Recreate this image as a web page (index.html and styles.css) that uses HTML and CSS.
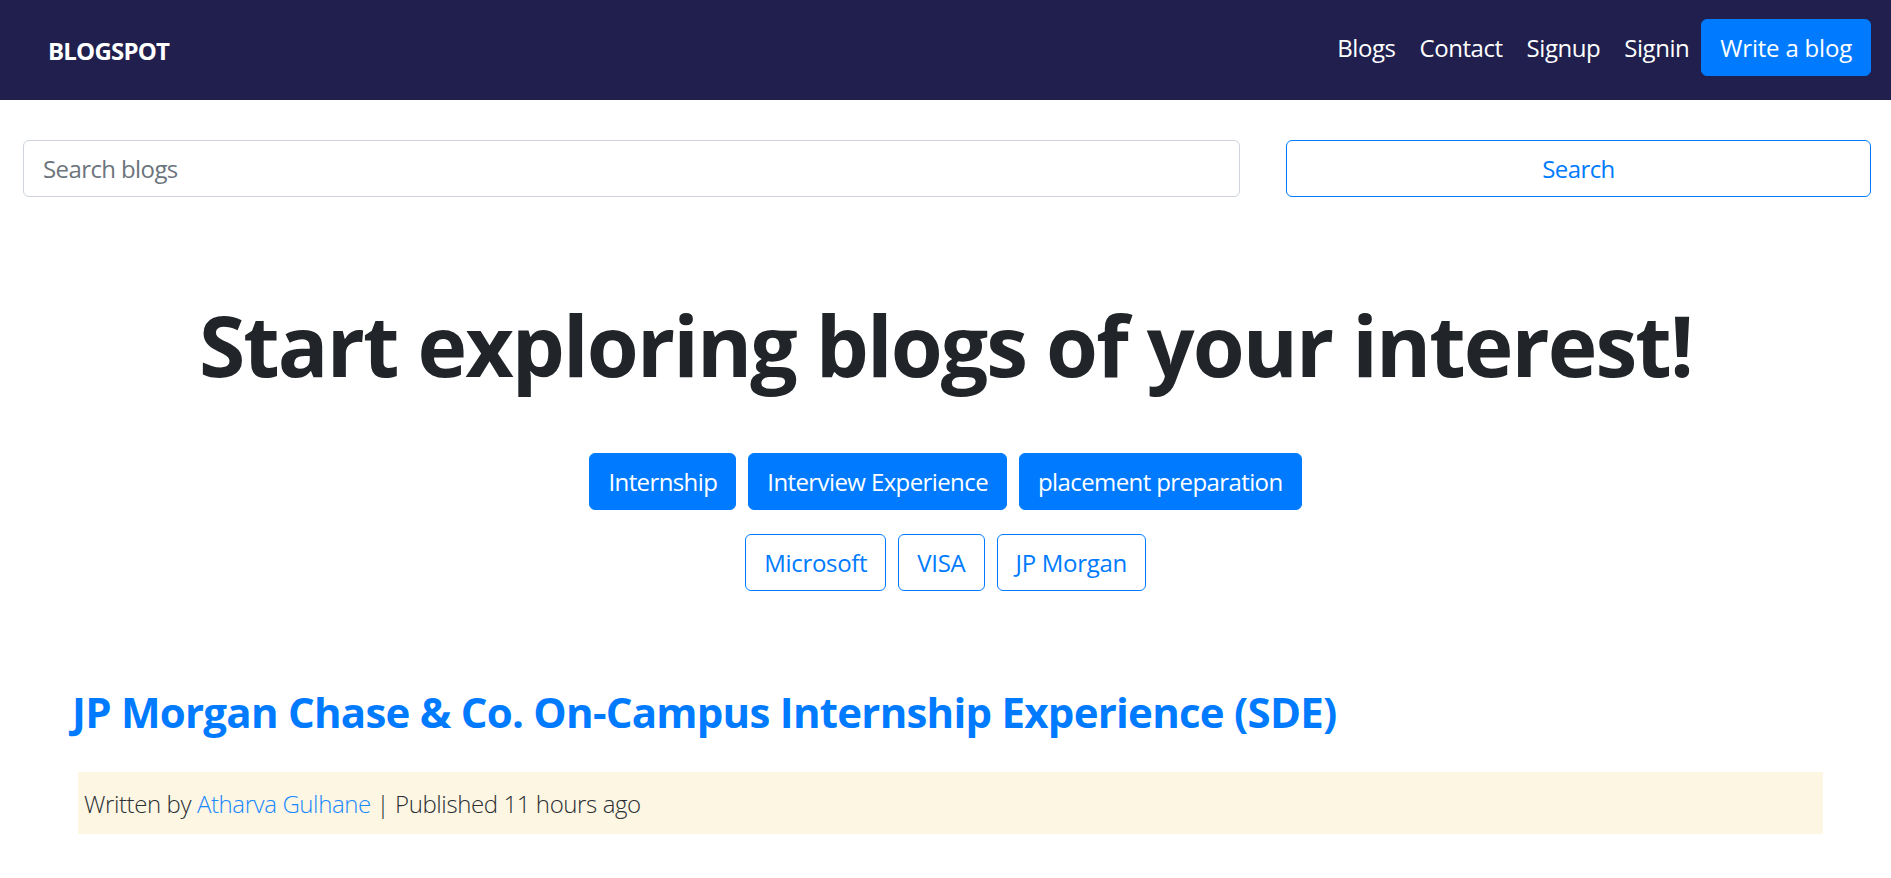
FILE: index.html
```html
<!DOCTYPE html>
<html lang="en">
<head>
<meta charset="utf-8">
<title>BLOGSPOT</title>
<link rel="stylesheet" href="styles.css">
</head>
<body>
<nav class="navbar">
  <a class="brand" href="#">BLOGSPOT</a>
  <div class="nav-links">
    <a class="nav-link" href="#">Blogs</a>
    <a class="nav-link" href="#">Contact</a>
    <a class="nav-link" href="#">Signup</a>
    <a class="nav-link" href="#">Signin</a>
    <a class="btn btn-primary write-btn" href="#">Write a blog</a>
  </div>
</nav>

<form class="search-row">
  <input class="search-input" type="text" placeholder="Search blogs">
  <button class="btn btn-outline search-btn" type="button">Search</button>
</form>

<section class="hero">
  <h1 class="hero-title">Start exploring blogs of your interest!</h1>
  <div class="tag-row">
    <a class="btn btn-primary" href="#">Internship</a>
    <a class="btn btn-primary" href="#">Interview Experience</a>
    <a class="btn btn-primary" href="#">placement preparation</a>
  </div>
  <div class="tag-row">
    <a class="btn btn-outline" href="#">Microsoft</a>
    <a class="btn btn-outline" href="#">VISA</a>
    <a class="btn btn-outline" href="#">JP Morgan</a>
  </div>
</section>

<section class="post">
  <h2 class="post-title"><a href="#">JP Morgan Chase &amp; Co. On-Campus Internship Experience (SDE)</a></h2>
  <p class="post-meta">Written by <a href="#">Atharva Gulhane</a> | Published 11 hours ago</p>
</section>
</body>
</html>
```

FILE: styles.css
```css
* {
  box-sizing: border-box;
}

body {
  margin: 0;
  font-family: "Open Sans", "Noto Sans", sans-serif;
  color: #212529;
  background: #fff;
  letter-spacing: -0.6px;
}

a {
  text-decoration: none;
}

.navbar {
  height: 100px;
  background: #201f4e;
  display: flex;
  align-items: center;
  justify-content: space-between;
  padding: 0 20px 5px 48px;
}

.brand {
  color: #fff;
  font-weight: 700;
  font-size: 24px;
  line-height: 36px;
  padding-top: 6px;
  letter-spacing: -0.8px;
}

.nav-links {
  display: flex;
  align-items: center;
}

.nav-link {
  color: #fff;
  font-size: 24px;
  line-height: 36px;
  padding: 0 12px;
  letter-spacing: -0.45px;
}

.btn {
  display: inline-block;
  font-family: inherit;
  font-size: 24px;
  line-height: 36px;
  padding: 10px 18px 9px;
  border: 1px solid #007bff;
  border-radius: 6px;
  text-align: center;
  cursor: pointer;
  letter-spacing: -0.6px;
}

.write-btn {
  letter-spacing: -0.2px;
}

.btn-primary {
  background: #007bff;
  color: #fff;
}

.btn-outline {
  background: #fff;
  color: #007bff;
}

.search-row {
  display: grid;
  grid-template-columns: 1fr 585px;
  gap: 46px;
  margin: 40px 20px 0 23px;
}

.search-input {
  height: 57px;
  font-family: inherit;
  font-size: 24px;
  padding: 0 19px;
  border: 1px solid #ced4da;
  border-radius: 6px;
  color: #495057;
  letter-spacing: -0.6px;
}

.search-input::placeholder {
  color: #6c757d;
}

.search-btn {
  height: 57px;
}

.hero {
  display: flex;
  flex-direction: column;
  align-items: center;
  margin-top: 98px;
}

.hero-title {
  margin: 0 0 57px;
  font-size: 84px;
  line-height: 1.2;
  font-weight: 700;
  letter-spacing: -1.9px;
}

.tag-row {
  display: flex;
  justify-content: center;
  gap: 12px;
  margin-bottom: 24px;
}

.tag-row .btn-outline {
  letter-spacing: -0.3px;
}

.post {
  margin: 72px 68px 0 72px;
}

.post-title {
  margin: 0 0 35px;
  font-size: 42px;
  line-height: 1.2;
  font-weight: 700;
  letter-spacing: -0.75px;
}

.post-title a {
  color: #007bff;
}

.post-meta {
  margin: 0 0 0 6px;
  background: #fcf6e3;
  font-size: 24px;
  line-height: 36px;
  font-weight: 300;
  color: #2b2f33;
  padding: 14px 6px 12px;
  letter-spacing: -0.4px;
}

.post-meta a {
  color: #1a88ff;
}
```
